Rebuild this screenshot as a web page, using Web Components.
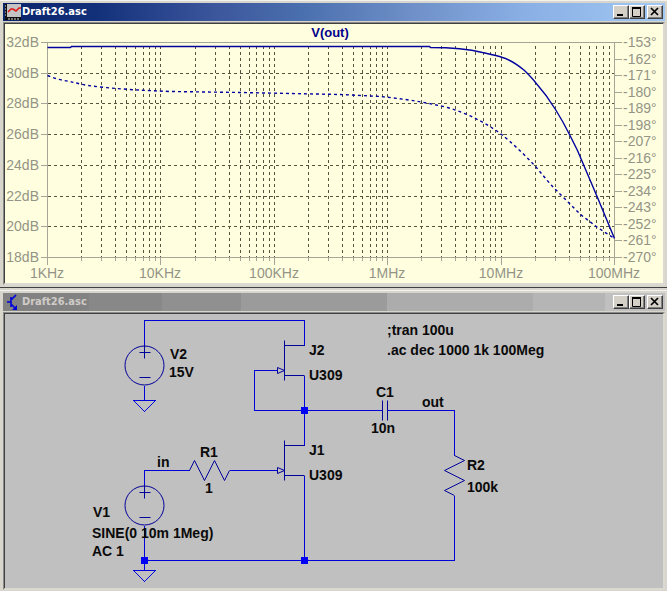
<!DOCTYPE html>
<html lang="en">
<head>
<meta charset="utf-8">
<title>Draft26.asc</title>
<style>
  html { background: #d8d5cd; }
  body {
    margin: 0;
    min-height: 100vh;
    display: flex;
    flex-direction: column;
    gap: 2px;
    font-family: "Liberation Sans", Arial, sans-serif;
  }
</style>
</head>
<body>
<mdi-window active caption="Draft26.asc">
  <svg slot="icon" width="16" height="16" viewBox="0 0 16 16" aria-hidden="true">
    <rect width="16" height="16" fill="#c4c4c4"/>
    <path d="M0 0H2V13H16V16H0z" fill="#111"/>
    <path d="M0 2H1M0 5H1M0 8H1M0 11H1M4 14V16M7 14V16M10 14V16M13 14V16" stroke="#ddd" fill="none"/>
    <path d="M3 8L6 5L8 5L11 7L14 4H16" stroke="#e01818" stroke-width="1.6" fill="none"/>
  </svg>
  <waveform-plot></waveform-plot>
</mdi-window>
<mdi-window caption="Draft26.asc">
  <svg slot="icon" width="16" height="16" viewBox="0 0 16 16" aria-hidden="true">
    <path d="M2 8H6M6 3V13M6 6L11 1M6 10L11 15" stroke="#0000d8" stroke-width="1.6" fill="none"/>
    <path d="M12 11V16H7z" fill="#0000d8"/>
  </svg>
  <circuit-schematic></circuit-schematic>
</mdi-window>

<script>
class CaptionButton extends HTMLElement {
  connectedCallback() {
    const glyphs = {
      Minimize: '<path d="M3 9H9" stroke-width="2"/>',
      Maximize: '<path d="M2 2H11" stroke-width="2"/><path d="M2.5 2V10.5H10.5V2"/>',
      Close: '<path d="M3 2L10 9M10 2L3 9" stroke-width="1.7"/>'
    };
    const kind = this.getAttribute('kind');
    this.attachShadow({ mode: 'open' }).innerHTML = `
      <style>
        :host { display: block; }
        button {
          display: grid; place-items: center;
          box-sizing: border-box; width: 16px; height: 14px;
          margin: 0; padding: 0;
          background: #d4d0c8;
          border: 1px solid; border-color: #fff #404040 #404040 #fff;
          box-shadow: inset -1px -1px #808080;
        }
        svg { display: block; width: 14px; height: 12px; stroke: #000; fill: none; }
      </style>
      <button type="button" aria-label="${kind}"><svg viewBox="0 0 14 12" aria-hidden="true">${glyphs[kind]}</svg></button>`;
  }
}
customElements.define('caption-button', CaptionButton);

class MdiWindow extends HTMLElement {
  connectedCallback() {
    this.attachShadow({ mode: 'open' }).innerHTML = `
      <style>
        :host {
          display: block;
          padding: 3px 2px 2px 3px;
          background: #d8d5cd;
          border-bottom: 1px solid #404040;
          box-shadow: inset 0 1px #f2f2ee;
        }
        :host(:last-of-type) { border-bottom-color: #d8d5cd; }
        header {
          display: flex; align-items: center; gap: 1px;
          height: 18px; padding: 0 2px;
          color: #d0ccc8;
          background: linear-gradient(90deg, #828282 13%, #888 13% 24%, #909090 24% 36%, #9b9b9b 36% 58%, #acacac 58% 80%, #b5b5b5 80% 91%, #c0c0c0 91%);
        }
        :host([active]) header {
          color: #fff;
          background: linear-gradient(90deg, #0a246a, #12307a 14%, #3c569c 32%, #4a6fae 45%, #6f90c8 62%, #88aee4 78%, #a2c8f4);
        }
        h1 {
          flex: 1; margin: 0;
          font: bold 11px/16px "DejaVu Sans Condensed", "DejaVu Sans", sans-serif;
        }
        .buttons { display: flex; }
        .buttons :last-child { margin-left: 2px; }
        .client {
          margin-top: 1px;
          border: 2px solid;
          border-color: #8a8a86 #dcd9d2 #dcd9d2 #8a8a86;
          box-shadow: inset 1px 1px #404040;
        }
        .frame {
          margin: -1px 0 0 -1px;
          border: solid #404040; border-width: 1px 0 0 1px;
        }
      </style>
      <header>
        <slot name="icon"></slot>
        <h1>${this.getAttribute('caption')}</h1>
        <div class="buttons">
          <caption-button kind="Minimize"></caption-button>
          <caption-button kind="Maximize"></caption-button>
          <caption-button kind="Close"></caption-button>
        </div>
      </header>
      <div class="client"><div class="frame"><slot></slot></div></div>`;
  }
}
customElements.define('mdi-window', MdiWindow);

class WaveformPlot extends HTMLElement {
  connectedCallback() {
    const left = 47, right = 614, top = 42, bottom = 257;
    let grid = '', axis = '', labels = '';
    for (let i = 0; i < 8; i++) {
      const y = Math.round(top + (bottom - top) * i / 7);
      if (i > 0 && i < 7) grid += `M${left} ${y}H${right}`;
      axis += `M40 ${y}H${left}`;
      labels += `<text x="39" y="${y + 5}" text-anchor="end">${32 - 2 * i}dB</text>`;
    }
    for (let i = 0; i < 14; i++) {
      const y = Math.round(top + (bottom - top) * i / 13);
      axis += `M${right} ${y}H621`;
      labels += `<text x="623" y="${y + 5}">-${153 + 9 * i}°</text>`;
    }
    ['1KHz', '10KHz', '100KHz', '1MHz', '10MHz', '100MHz'].forEach((name, d) => {
      const decade = (right - left) / 5;
      const x = Math.round(left + decade * d);
      axis += `M${x} ${bottom}V264`;
      labels += `<text x="${x}" y="278" text-anchor="middle">${name}</text>`;
      if (d > 0 && d < 5) grid += `M${x} ${top + 3}V${bottom}`;
      if (d < 5) for (let k = 2; k < 10; k++) {
        const mx = Math.round(left + decade * (d + Math.log10(k)));
        grid += `M${mx} ${top + 3}V${bottom}`;
        axis += `M${mx} ${bottom}V260`;
      }
    });
    this.attachShadow({ mode: 'open' }).innerHTML = `
      <style>
        :host { display: block; background: #ffffe0; }
        svg { display: block; width: 100%; height: auto; }
        path { fill: none; }
        text { font: 14px "Liberation Sans", Arial, sans-serif; fill: #949486; }
        .title { font-size: 13px; font-weight: bold; fill: #00008c; }
        .grid { stroke: #55553f; stroke-dasharray: 3 3; shape-rendering: crispEdges; }
        .axis { stroke: #a6a698; shape-rendering: crispEdges; }
        .trace { stroke: #0000a0; stroke-width: 1.4; }
        .phase { stroke-dasharray: 3 3; }
      </style>
      <svg viewBox="5 24 658 259" role="img" aria-label="Frequency response of V(out)">
        <g transform="translate(.5 .5)">
          <path class="grid" d="${grid}"/>
          <path class="axis" d="M${left} ${top}H${right}V${bottom}H${left}z${axis}"/>
          <path class="trace" d="M47 47H70L71 46H429L430 47C447 47 470 49 482 52C491 54 496 55 502 57C512 60 518 65 524 70C529 75 532 78 535 82C543 91 549 99 555 109C560 117 565 126 569 134L577 150L597 197L614 238"/>
          <path class="trace phase" d="M47 75C54 78 62 80 70 81C80 84 92 86 105 87C125 89 145 90 170 91L240 92L290 93L340 94L380 96C400 98 422 101 447 107C467 113 485 122 501 134C510 141 524 154 535 166C542 174 548 182 555 189L564 198L580 214L597 227L614 238"/>
        </g>
        ${labels}
        <text class="title" x="330" y="37" text-anchor="middle">V(out)</text>
      </svg>`;
  }
}
customElements.define('waveform-plot', WaveformPlot);

class CircuitSchematic extends HTMLElement {
  connectedCallback() {
    const source = y => `<circle cx="144" cy="${y}" r="19.5"/><path d="M144 ${y - 20}V${y - 7}M139 ${y - 13}H150M139 ${y + 12}H150"/>`;
    const jfet = y => `<path d="M284 ${y}V${y + 40}M284 ${y + 5}H304M284 ${y + 35}H304M277 ${y + 27}L284 ${y + 30}L277 ${y + 33}z"/>`;
    const ground = y => `M133 ${y}H155L144 ${y + 11}z`;
    const node = (x, y) => `<rect x="${x - 3}" y="${y - 3}" width="7" height="7"/>`;
    const labels = [
      [170, 359, 'V2'], [169, 377, '15V'], [309, 355, 'J2'], [309, 380, 'U309'],
      [309, 455, 'J1'], [309, 480, 'U309'], [376, 397, 'C1'], [371, 433, '10n'],
      [422, 407, 'out'], [467, 470, 'R2'], [467, 492, '100k'], [157, 467, 'in'],
      [200, 457, 'R1'], [205, 493, '1'], [93, 517, 'V1'],
      [92, 538, 'SINE(0 10m 1Meg)'], [92, 556, 'AC 1'],
      [387, 335, ';tran 100u'], [387, 355, '.ac dec 1000 1k 100Meg']
    ].map(([x, y, s]) => `<text x="${x}" y="${y}">${s}</text>`).join('');
    this.attachShadow({ mode: 'open' }).innerHTML = `
      <style>
        :host { display: block; background: #c0c0c0; }
        svg { display: block; width: 100%; height: auto; }
        text { font: bold 14px "Liberation Sans", Arial, sans-serif; fill: #0a0a0a; }
        .wire { stroke: #0000d8; fill: none; shape-rendering: crispEdges; }
        .part { stroke: #00009a; fill: none; }
        .node { fill: #0000f4; }
      </style>
      <svg viewBox="5 314 658 274" role="img" aria-label="JFET amplifier circuit">
        <g transform="translate(.5 .5)">
          <path class="wire" d="M144 345V320H304V345M304 375V445M277 370H254V410H382M387 410H454V455M454 495V560H144M304 475V560M144 485V470H189M229 470H277M144 385V400M144 525V570${ground(400)}${ground(570)}"/>
          <g class="part">
            ${source(365)}${source(505)}${jfet(340)}${jfet(440)}
            <path d="M382 400V420M387 400V420"/>
            <path d="M189 470L194 460L204 480L214 460L224 480L229 470M454 455L464 460L444 470L464 480L444 490L454 495"/>
          </g>
        </g>
        <g class="node">${node(304, 410)}${node(304, 560)}${node(144, 560)}</g>
        ${labels}
      </svg>`;
  }
}
customElements.define('circuit-schematic', CircuitSchematic);
</script>
</body>
</html>
